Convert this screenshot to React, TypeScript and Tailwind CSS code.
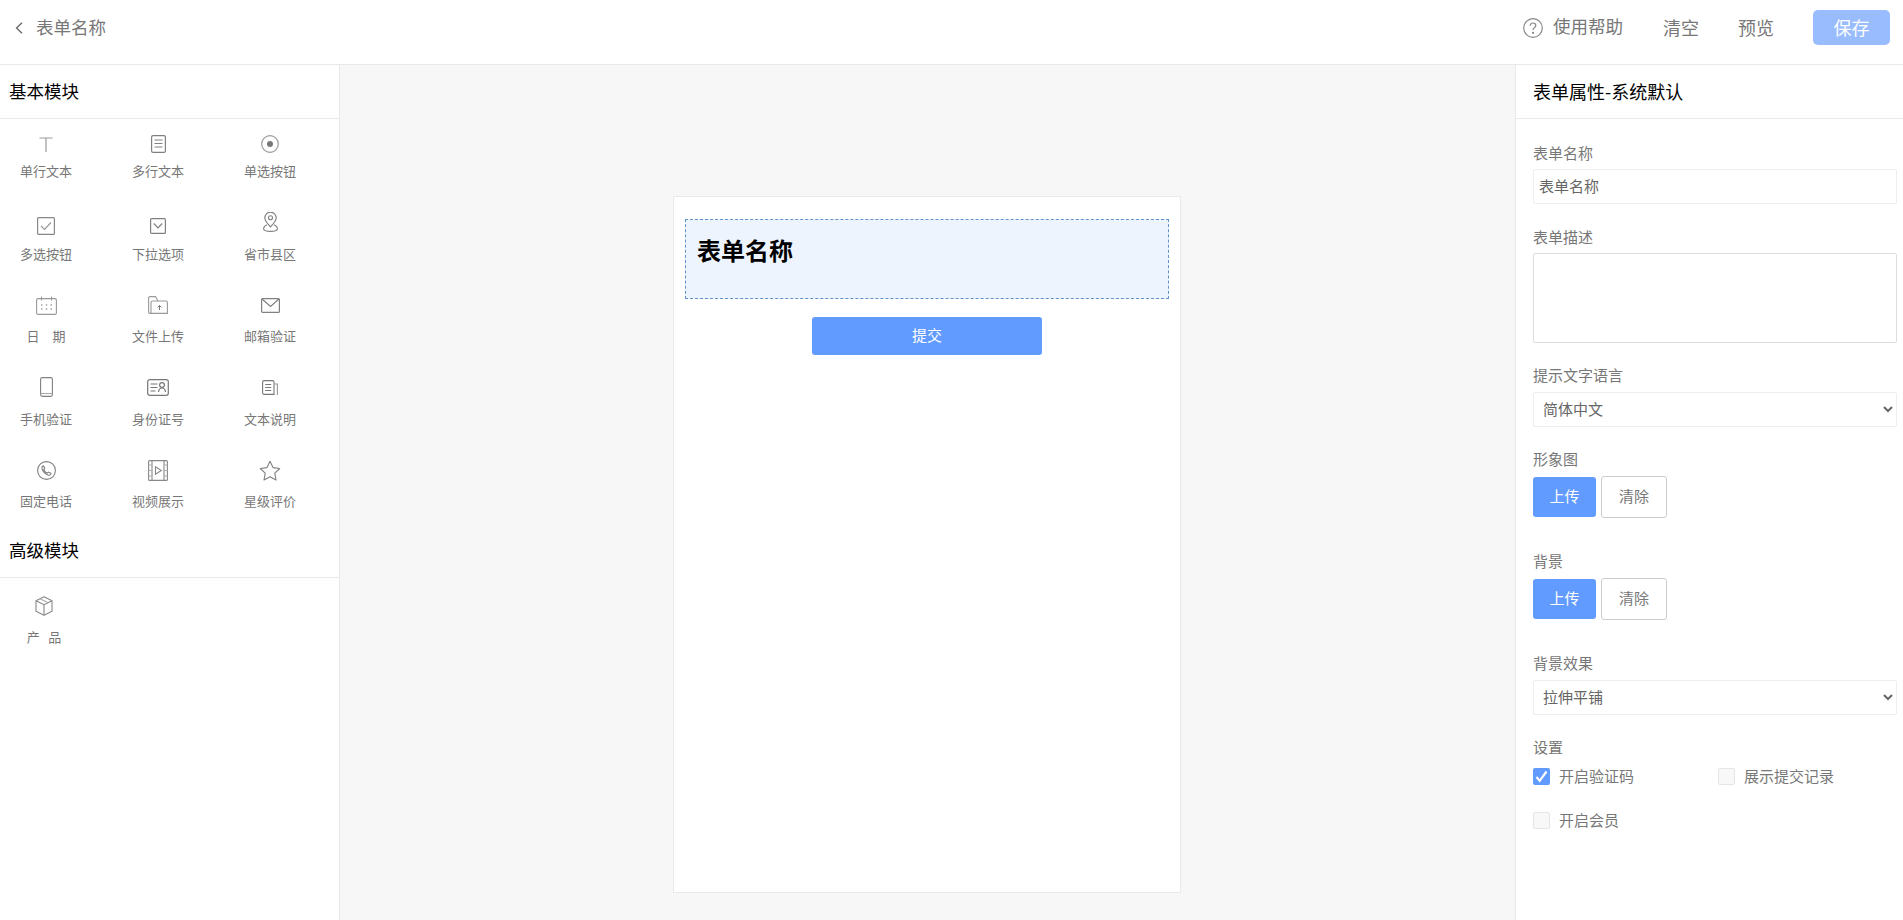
import React from "react";

const FONT = "font-['Microsoft_YaHei','Noto_Sans_CJK_SC','Noto_Sans',sans-serif]";

// module icons, each viewBox is the drawn size in px
const icons: Record<string, React.ReactNode> = {
  text: (
    <svg width="14" height="15" viewBox="0 0 14 15" fill="none" stroke="#999" strokeWidth="1.2">
      <path d="M0.5 1h13M7 1v14" />
    </svg>
  ),
  textarea: (
    <svg width="15" height="18" viewBox="0 0 15 18" fill="none" stroke="#808080" strokeWidth="1.2">
      <rect x="0.6" y="0.6" width="13.8" height="16.8" rx="1.5" />
      <path d="M3.5 5h8M3.5 8.5h8M3.5 12h8" />
    </svg>
  ),
  radio: (
    <svg width="18" height="18" viewBox="0 0 18 18" fill="none">
      <circle cx="9" cy="9" r="8.3" stroke="#999" strokeWidth="1.2" />
      <circle cx="9" cy="9" r="3" fill="#777" />
    </svg>
  ),
  checkbox: (
    <svg width="18" height="18" viewBox="0 0 18 18" fill="none" stroke="#888" strokeWidth="1.2">
      <rect x="0.6" y="0.6" width="16.8" height="16.8" rx="1" />
      <path d="M4 9l3.5 3.5L14 5.5" stroke="#999" />
    </svg>
  ),
  dropdown: (
    <svg width="16" height="16" viewBox="0 0 16 16" fill="none" stroke="#808080" strokeWidth="1.2">
      <rect x="0.6" y="0.6" width="14.8" height="14.8" rx="1" />
      <path d="M3.8 5.5L8 9.8l4.2-4.3" />
    </svg>
  ),
  location: (
    <svg width="15" height="20" viewBox="0 0 15 20" fill="none" stroke="#808080" strokeWidth="1.1">
      <path d="M7.5 15C4.5 11.300 1.800 8.700 1.800 5.900a5.700 5.700 0 0 1 11.400 0c0 2.800-2.700 5.400-5.700 9.100z" />
      <circle cx="7.500" cy="5.800" r="2" />
      <path d="M4 12.800C1.900 13.700.6 15.100.6 16.800c0 1.700 2.400 2.600 6.900 2.600s6.900-.9 6.900-2.600c0-1.700-1.300-3.100-3.400-4" />
    </svg>
  ),
  date: (
    <svg width="21" height="19" viewBox="0 0 21 19" fill="none" stroke="#999" strokeWidth="1.1">
      <rect x="0.6" y="2.600" width="19.800" height="15.800" rx="1.500" />
      <path d="M5.500 0.500v4M15.500 0.500v4" />
      <path d="M5 9h1.500M9.800 9h1.500M14.500 9h1.500M5 13h1.500M9.800 13h1.500M14.500 13h1.500" stroke="#777" />
    </svg>
  ),
  upload: (
    <svg width="20" height="18" viewBox="0 0 20 18" fill="none" stroke="#999" strokeWidth="1.1">
      <path d="M3 17.400H2A1.400 1.400 0 0 1 .6 16V2A1.400 1.400 0 0 1 2 .6h5.500L10 5h8a1.400 1.400 0 0 1 1.400 1.400V17.400z" />
      <path d="M3 17.400V6.400A1.400 1.400 0 0 1 4.400 5H10" />
      <path d="M11.500 14V9.500M9.700 11.300l1.800-1.800 1.800 1.800" stroke="#666" strokeWidth="0.9" />
    </svg>
  ),
  mail: (
    <svg width="19" height="15" viewBox="0 0 19 15" fill="none" stroke="#808080" strokeWidth="1.2">
      <rect x="0.6" y="0.6" width="17.800" height="13.800" rx="1" />
      <path d="M1 1l8.500 7.500L18 1" />
    </svg>
  ),
  mobile: (
    <svg width="13" height="20" viewBox="0 0 13 20" fill="none" stroke="#808080" strokeWidth="1.1">
      <rect x="0.6" y="0.6" width="11.800" height="18.800" rx="1.800" />
      <path d="M0.600 16.500h11.800" stroke="#aaa" />
    </svg>
  ),
  idcard: (
    <svg width="22" height="17" viewBox="0 0 22 17" fill="none" stroke="#777" strokeWidth="1.2">
      <rect x="0.7" y="0.7" width="20.600" height="15.600" rx="2" />
      <path d="M3.500 5h7M3.500 8.500h7M3.500 12h5" />
      <circle cx="15" cy="6" r="2.400" />
      <path d="M11.500 13c.3-2.800 1.700-4 3.500-4s3.200 1.200 3.500 4" />
    </svg>
  ),
  note: (
    <svg width="16" height="15" viewBox="0 0 16 15" fill="none" stroke="#777" strokeWidth="1.1">
      <path d="M12 14.400H2A1.500 1.500 0 0 1 .6 13V2A1.500 1.500 0 0 1 2 .6h8.500A1.500 1.500 0 0 1 12 2z" />
      <path d="M12 4h3.400v9a1.400 1.400 0 0 1-3.400 1.400" stroke="#999" />
      <path d="M3.200 4.500h6M3.200 7.500h6M3.200 10.500h6" />
    </svg>
  ),
  phone: (
    <svg width="19" height="19" viewBox="0 0 19 19" fill="none" stroke="#808080" strokeWidth="1.1">
      <circle cx="9.500" cy="9.500" r="8.900" />
      <path d="M6.300 4.800l1.500 2.500-1 1.300c.6 1.600 1.700 2.800 3.400 3.500l1.300-1 2.600 1.500c-.5 1.400-1.500 1.900-2.700 1.600C8.400 13 5.800 10.300 5 7.500c-.3-1.200.2-2.200 1.300-2.700z" />
    </svg>
  ),
  video: (
    <svg width="20" height="21" viewBox="0 0 20 21" fill="none" stroke="#888" strokeWidth="1.1">
      <rect x="0.6" y="0.6" width="18.800" height="19.800" rx="1" />
      <path d="M4 .6v19.800M16 .6v19.800" />
      <path d="M0.600 5h3.400M0.600 10.500h3.400M0.600 16h3.400M16 5h3.400M16 10.500h3.400M16 16h3.400" stroke="#aaa" />
      <path d="M7.500 6.800v7.400l5.800-3.700z" />
    </svg>
  ),
  star: (
    <svg width="22" height="21" viewBox="0 0 22 21" fill="none" stroke="#808080" strokeWidth="1.1">
      <path d="M11 1.300l3 6.300 6.700.9-4.900 4.700 1.200 6.800-6-3.300-6 3.300 1.200-6.800L1.300 8.500 8 7.600z" strokeLinejoin="round" />
    </svg>
  ),
  box: (
    <svg width="18" height="20" viewBox="0 0 18 20" fill="none" stroke="#888" strokeWidth="1.1">
      <path d="M9 .7l8 4v10.500l-8 4-8-4V4.700z" strokeLinejoin="round" />
      <path d="M1 4.700l8 4 8-4M9 8.700v10.500" />
      <path d="M5 2.700l8 4" stroke="#aaa" />
    </svg>
  ),
};

// third value lifts the icon inside its box, the reference rows are not even
const basicModules = [
  ["text", "单行文本", "pb-[2px]"],
  ["textarea", "多行文本", "pb-[2px]"],
  ["radio", "单选按钮", "pb-[2px]"],
  ["checkbox", "多选按钮", "pb-[3px]"],
  ["dropdown", "下拉选项", "pb-[3px]"],
  ["location", "省市县区", "pb-[11px]"],
  ["date", "日　期", "pb-[10px]"],
  ["upload", "文件上传", "pb-[10px]"],
  ["mail", "邮箱验证", "pb-[10px]"],
  ["mobile", "手机验证", "pb-[11px]"],
  ["idcard", "身份证号", "pb-[11px]"],
  ["note", "文本说明", "pb-[11px]"],
  ["phone", "固定电话", "pb-[10px]"],
  ["video", "视频展示", "pb-[10px]"],
  ["star", "星级评价", "pb-[10px]"],
];

const ModuleItem = ({ icon, label, lift = "", labelGap = "mt-[2px]" }: { icon: string; label: string; lift?: string; labelGap?: string }) => (
  <div className="flex flex-col items-center">
    <div className={`flex h-[28px] items-center justify-center ${lift}`}>{icons[icon]}</div>
    <div className={`${labelGap} whitespace-pre text-[13px] leading-[20px] text-[#777]`}>{label}</div>
  </div>
);

const PanelTitle = ({ children, className }: { children: React.ReactNode; className: string }) => (
  <div className={`flex h-[54px] items-center border-b border-[#e9e9e9] text-black ${className}`}>{children}</div>
);

const FieldLabel = ({ children, gap }: { children: React.ReactNode; gap?: string }) => (
  <div className={`h-[20px] text-[15px] leading-[18px] text-[#777] ${gap ?? ""}`}>{children}</div>
);

const UploadRow = () => (
  <div className="mt-[6px] flex items-center gap-[5px]">
    <button className="h-[40px] w-[63px] rounded-[3px] bg-[#619bff] pb-[2px] text-[15px] text-white">上传</button>
    <button className="h-[42px] w-[66px] rounded-[3px] border border-[#ccc] bg-white pb-[2px] text-[15px] text-[#777]">清除</button>
  </div>
);

const Check = ({ checked, label }: { checked?: boolean; label: string }) => (
  <div className="flex items-center gap-[9px]">
    {checked ? (
      <span className="flex h-[17px] w-[17px] items-center justify-center rounded-[2px] bg-[#619bff]">
        <svg width="13" height="13" viewBox="0 0 13 13" fill="none" stroke="#fff" strokeWidth="2.2">
          <path d="M1.500 7l3.200 3.800L11.500 1.500" />
        </svg>
      </span>
    ) : (
      <span className="h-[17px] w-[17px] rounded-[2px] border border-[#e5e5e5] bg-[#f8f8f8]" />
    )}
    <span className="text-[15px] leading-[20px] text-[#777]">{label}</span>
  </div>
);

const App: React.FC = () => {
  return (
    <div className={`flex h-[920px] flex-col overflow-hidden bg-white ${FONT}`}>
      {/* top bar */}
      <header className="flex h-[65px] shrink-0 items-center justify-between border-b border-[#e9e9e9] pb-[9px] pl-[15px] pr-[13px]">
        <div className="flex items-center gap-[13px] text-[17.5px] text-[#777]">
          <svg width="8" height="12" viewBox="0 0 8 12" fill="none" stroke="#666" strokeWidth="1.300">
            <path d="M7 .8L1.500 6 7 11.200" />
          </svg>
          <span>表单名称</span>
        </div>
        <div className="flex items-center text-[18px] text-[#777]">
          <svg width="20" height="20" viewBox="0 0 20 20" fill="none" stroke="#888" strokeWidth="1.200">
            <circle cx="10" cy="10" r="9.300" />
            <path d="M7.200 7.800C7.200 6 8.500 5 10 5s2.800 1 2.800 2.600c0 2.200-2.800 2.300-2.800 4.400" />
            <circle cx="10" cy="14.800" r="0.500" fill="#888" />
          </svg>
          <span className="ml-[10px] pb-[2px] text-[17.5px]">使用帮助</span>
          <span className="ml-[40px]">清空</span>
          <span className="ml-[39px]">预览</span>
          <button className="ml-[39px] h-[35px] w-[77px] rounded-[5px] bg-[#98bcfe] text-[18px] text-white">保存</button>
        </div>
      </header>

      <div className="flex min-h-0 flex-1">
        {/* module list */}
        <aside className="w-[340px] shrink-0 border-r border-[#e9e9e9]">
          <PanelTitle className="pl-[9px] text-[17.5px]">基本模块</PanelTitle>
          <div className="grid grid-cols-[repeat(3,92px)] gap-x-5 gap-y-[20.5px] pt-[12px] [grid-auto-rows:62px]">
            {basicModules.map(([icon, label, lift]) => (
              <ModuleItem key={label} icon={icon} label={label} lift={lift} />
            ))}
          </div>
          <div className="mt-[1px]">
            <PanelTitle className="pl-[9px] text-[17.5px]">高级模块</PanelTitle>
          </div>
          <div className="mt-[14px] w-[88px]">
            <ModuleItem icon="box" label="产   品" labelGap="mt-[7px]" />
          </div>
        </aside>

        {/* canvas */}
        <main className="flex min-w-0 flex-1 justify-center bg-[#f7f7f7] pr-[1px] pt-[131px]">
          <div className="h-[697px] w-[508px] border border-[#e9e9e9] bg-white px-[11px] pt-[22px]">
            <div className="h-[80px] border border-dashed border-[#5f93c9] bg-[#edf4fe] px-[11px] pt-[12px] text-[24px] font-bold leading-[36px] text-black">
              表单名称
            </div>
            <button className="mx-auto mt-[18px] block h-[38px] w-[230px] rounded-[3px] bg-[#619bff] pb-[2px] text-[15px] text-white">提交</button>
          </div>
        </main>

        {/* form properties */}
        <aside className="w-[388px] shrink-0 border-l border-[#e9e9e9]">
          <PanelTitle className="pl-[17px] text-[18px]">表单属性-系统默认</PanelTitle>
          <div className="pl-[17px] pr-[6px] pt-[25px]">
            <FieldLabel>表单名称</FieldLabel>
            <input
              readOnly
              value="表单名称"
              className="mt-[5px] block h-[35px] w-full rounded-[2px] border border-[#eee] px-[5px] pb-[2px] text-[15px] text-[#666] outline-none"
            />
            <FieldLabel gap="mt-[24px]">表单描述</FieldLabel>
            <textarea readOnly className="mt-[5px] block h-[90px] w-full resize-none rounded-[2px] border border-[#ddd] outline-none" />
            <FieldLabel gap="mt-[23px]">提示文字语言</FieldLabel>
            <select defaultValue="zh" className="mt-[6px] block h-[35px] w-full rounded-[2px] border border-[#eee] bg-white px-[5px] pb-[2px] text-[15px] text-[#666] outline-none">
              <option value="zh">简体中文</option>
            </select>
            <FieldLabel gap="mt-[23px]">形象图</FieldLabel>
            <UploadRow />
            <FieldLabel gap="mt-[34px]">背景</FieldLabel>
            <UploadRow />
            <FieldLabel gap="mt-[34px]">背景效果</FieldLabel>
            <select defaultValue="stretch" className="mt-[6px] block h-[35px] w-full rounded-[2px] border border-[#eee] bg-white px-[5px] pb-[2px] text-[15px] text-[#666] outline-none">
              <option value="stretch">拉伸平铺</option>
            </select>
            <FieldLabel gap="mt-[23px]">设置</FieldLabel>
            <div className="mt-[8px] grid grid-cols-[185px_1fr] gap-y-[24px]">
              <Check checked label="开启验证码" />
              <Check label="展示提交记录" />
              <Check label="开启会员" />
            </div>
          </div>
        </aside>
      </div>
    </div>
  );
};

export default App;
